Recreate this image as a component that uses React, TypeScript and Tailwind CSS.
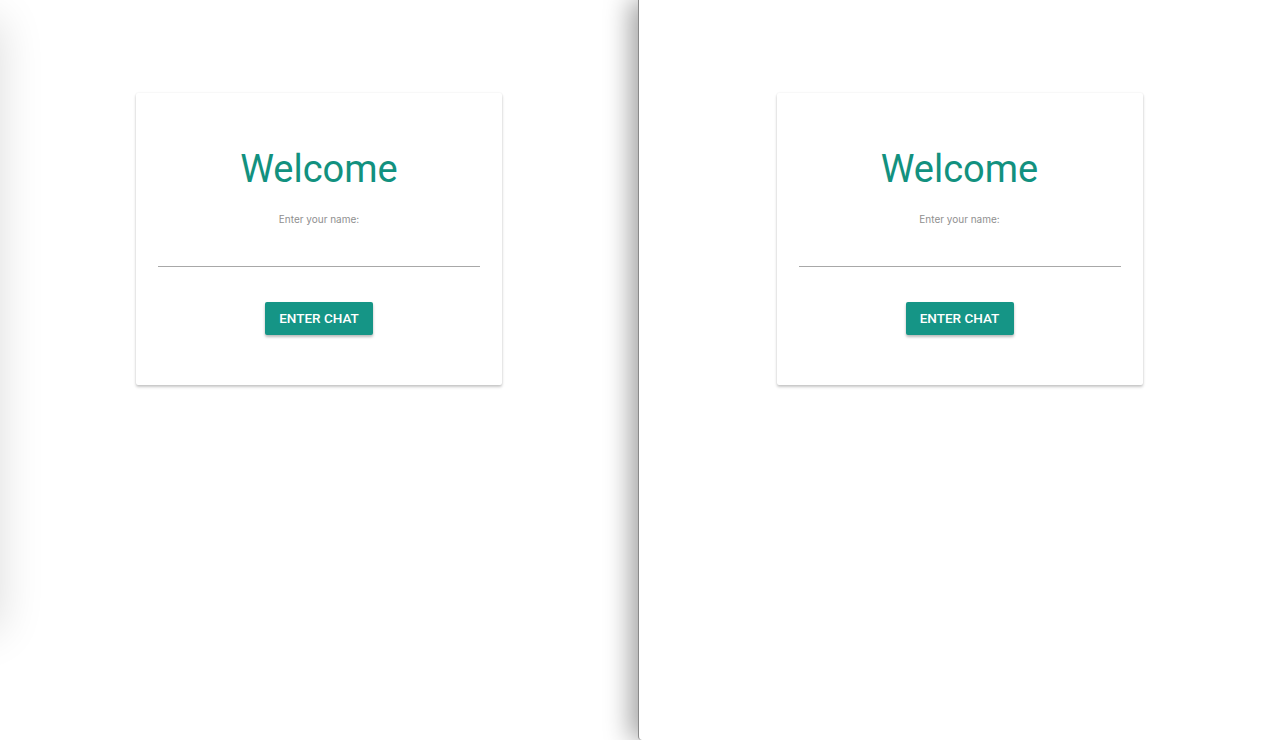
import React from 'react';

function LoginCard() {
  return (
    <div className="w-[366px] h-[292px] bg-white rounded-[2px] shadow-[0_2px_3px_rgba(0,0,0,0.22),0_0_2px_rgba(0,0,0,0.08)] flex flex-col items-center px-[22px]">
      <h1 className="mt-[53px] text-[38px] leading-[46px] text-[#12917f] font-['Roboto',sans-serif]">Welcome</h1>
      <p className="mt-[20px] text-[10px] leading-[14px] text-[#8f8f8f] font-['Inter',sans-serif]">Enter your name:</p>
      <input
        className="mt-[17px] w-full h-[24px] border-b border-[#a8a8a8] outline-none text-sm font-['Roboto',sans-serif]"
        type="text"
      />
      <button className="mt-[35px] w-[108px] h-[33px] bg-[#159586] text-white text-[13.5px] font-medium rounded-[2px] shadow-[0_2px_3px_rgba(0,0,0,0.28)] font-['Roboto',sans-serif]">
        ENTER CHAT
      </button>
    </div>
  );
}

function Pane({ right }: { right?: boolean }) {
  return (
    <div
      className={
        right
          ? 'relative flex-1 h-full bg-white border-l border-[#8a8a8a] rounded-bl-[4px] shadow-[-8px_0_26px_rgba(0,0,0,0.36)] flex justify-center pt-[93px]'
          : 'relative w-[638px] h-full bg-white flex justify-center pt-[93px]'
      }
    >
      <LoginCard />
    </div>
  );
}

export default function App() {
  return (
    <div className="relative w-[1280px] h-[740px] overflow-hidden bg-white flex">
      <Pane />
      <Pane right />
      <div className="absolute z-10 -left-[100px] top-[20px] w-[100px] h-[610px] shadow-[0_0_45px_rgba(0,0,0,0.14)] pointer-events-none" />
    </div>
  );
}
